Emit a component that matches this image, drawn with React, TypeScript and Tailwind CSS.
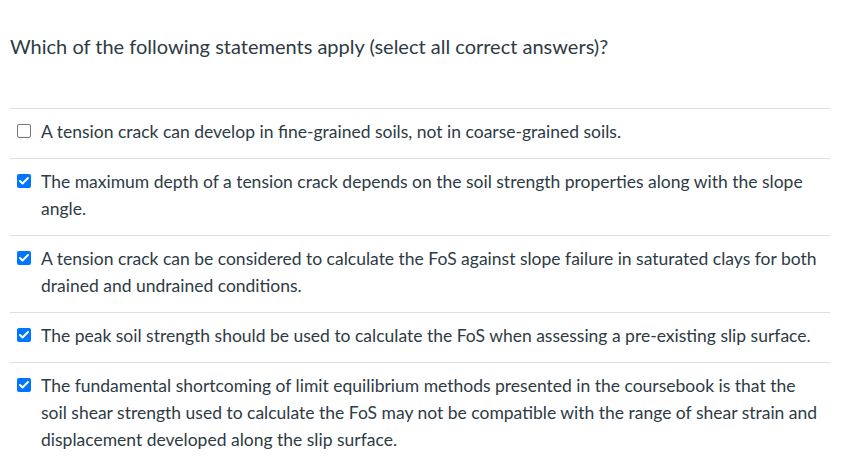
import { Check } from "lucide-react";

type Answer = { id: string; text: string; checked: boolean };

const answers: Answer[] = [
  {
    id: "a1",
    text: "A tension crack can develop in fine-grained soils, not in coarse-grained soils.",
    checked: false,
  },
  {
    id: "a2",
    text: "The maximum depth of a tension crack depends on the soil strength properties along with the slope angle.",
    checked: true,
  },
  {
    id: "a3",
    text: "A tension crack can be considered to calculate the FoS against slope failure in saturated clays for both drained and undrained conditions.",
    checked: true,
  },
  {
    id: "a4",
    text: "The peak soil strength should be used to calculate the FoS when assessing a pre-existing slip surface.",
    checked: true,
  },
  {
    id: "a5",
    text: "The fundamental shortcoming of limit equilibrium methods presented in the coursebook is that the soil shear strength used to calculate the FoS may not be compatible with the range of shear strain and displacement developed along the slip surface.",
    checked: true,
  },
];

function Box({ checked }: { checked: boolean }) {
  return checked ? (
    <span className="mt-[5px] grid h-[14px] w-[14px] shrink-0 place-items-center rounded-[2px] bg-[#0075ff]">
      <Check className="h-[12px] w-[12px] text-white" strokeWidth={4} />
    </span>
  ) : (
    <span className="mt-[5px] h-[14px] w-[14px] shrink-0 rounded-[2px] border border-[#767676] bg-white" />
  );
}

export default function App() {
  return (
    <div className="min-h-screen bg-white font-['Lato','Noto_Sans',sans-serif] text-[#2d3b45]">
      <div className="pl-[10px] pr-[12px]">
        <p className="pt-[31px] pb-[47px] text-[20px] leading-[30px]">
          Which of the following statements apply (select all correct answers)?
        </p>
        <ul>
          {answers.map((a) => (
            <li
              key={a.id}
              className="flex gap-[10px] border-t border-[#dcdfe2] pt-[10px] pb-[12.5px] pl-[7px] pr-[6px] text-[17.5px] leading-[26.7px]"
            >
              <Box checked={a.checked} />
              <span>{a.text}</span>
            </li>
          ))}
        </ul>
      </div>
    </div>
  );
}
